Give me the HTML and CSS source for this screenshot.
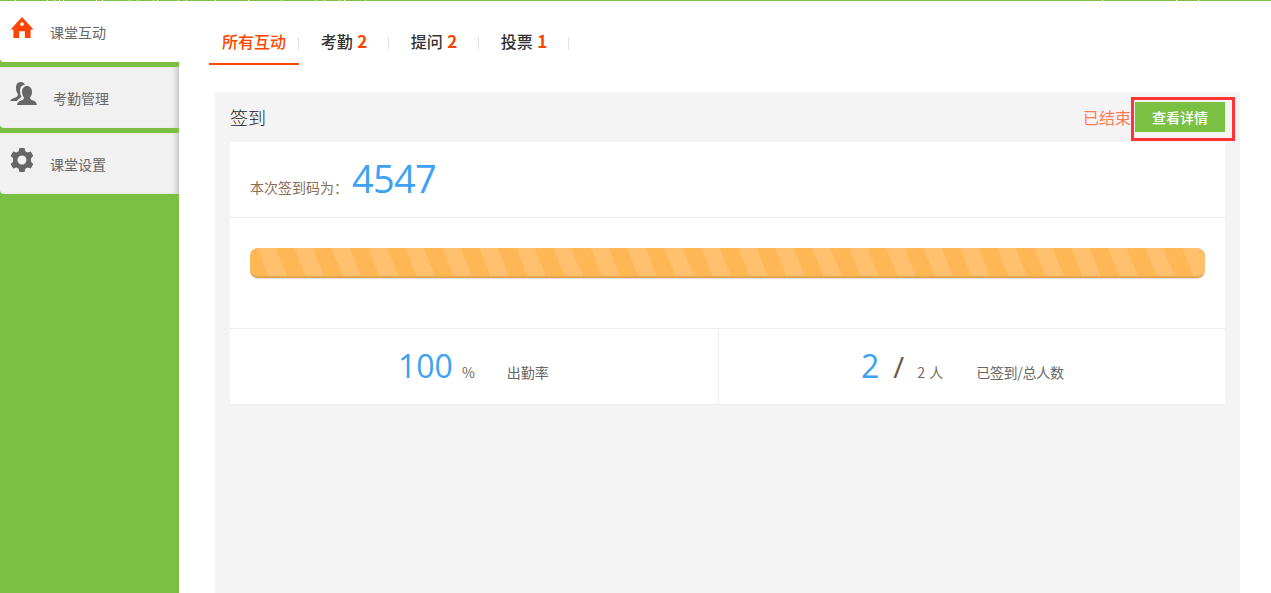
FILE: index.html
```html
<!DOCTYPE html>
<html>
<head>
    <meta charset="UTF-8">
    <meta name="viewport" content="width=device-width, initial-scale=1.0">
    <title>课堂互动</title>
    <link rel="stylesheet" href="styles.css">
</head>
<body>
    <div class="topline"></div>
    <div class="page">
        <div class="sidebar">
            <a class="side-item active">
                <svg class="side-icon icon-home" viewBox="0 0 24 22"><path d="M12 0 L24 13 L21 13 L21 22 L15 22 L15 15 L9 15 L9 22 L3 22 L3 13 L0 13 Z M12 5.5 a2 2 0 1 0 0.01 0 Z" fill-rule="evenodd"/></svg>
                <span class="side-text">课堂互动</span>
            </a>
            <a class="side-item item-people">
                <svg class="side-icon icon-people" viewBox="0 0 27 23"><path d="M11 0 C7 0 6 3 6 6 C6 9 7 11 8 12 C8 14 7 15 4 16 C2 17 0 18 0 19 L7 19 C8 17 10 16 11.5 15 C10.5 13 10 11 10 8 C10 5 12 3 15 2.5 C14 1 13 0 11 0 Z"/><path d="M17 4 C14 4 12 6.5 12 10 C12 12.5 13 14.5 14 15.5 C14 17 13 18 11 18.5 C9 19 7.5 20.5 7 23 L27 23 C26.5 20.5 25 19 23 18.5 C21 18 20 17 20 15.5 C21 14.5 22 12.5 22 10 C22 6.5 20 4 17 4 Z"/></svg>
                <span class="side-text">考勤管理</span>
            </a>
            <a class="side-item">
                <svg class="side-icon icon-gear" viewBox="0 0 24 24"><path fill-rule="evenodd" d="M9.5 0 L14.5 0 L15.3 3.2 L17.6 4.5 L20.8 3.6 L23.3 7.9 L21 10.2 L21 13.8 L23.3 16.1 L20.8 20.4 L17.6 19.5 L15.3 20.8 L14.5 24 L9.5 24 L8.7 20.8 L6.4 19.5 L3.2 20.4 L0.7 16.1 L3 13.8 L3 10.2 L0.7 7.9 L3.2 3.6 L6.4 4.5 L8.7 3.2 Z M12 7.5 a4.5 4.5 0 1 0 0.01 0 Z"/></svg>
                <span class="side-text">课堂设置</span>
            </a>
        </div>
        <div class="main">
            <div class="tabs">
                <a class="tab current">所有互动</a>
                <a class="tab">考勤 <b>2</b></a>
                <a class="tab">提问 <b>2</b></a>
                <a class="tab">投票 <b>1</b></a>
            </div>
            <div class="card">
                <div class="card-head">
                    <span class="card-title">签到</span>
                    <div class="card-actions">
                        <span class="status">已结束</span>
                        <a class="btn-detail">查看详情</a>
                    </div>
                </div>
                <div class="card-body">
                    <div class="code-row">
                        <span class="code-label">本次签到码为：</span>
                        <span class="code-num">4547</span>
                    </div>
                    <div class="progress-row">
                        <div class="progress"></div>
                    </div>
                    <div class="stats">
                        <div class="stat stat-left">
                            <span class="big">100</span>
                            <span class="unit">%</span>
                            <span class="stat-label">出勤率</span>
                        </div>
                        <div class="stat stat-right">
                            <span class="big">2</span>
                            <span class="slash">/</span>
                            <span class="unit">2 人</span>
                            <span class="stat-label">已签到/总人数</span>
                        </div>
                    </div>
                </div>
            </div>
        </div>
    </div>
</body>
</html>
```

FILE: styles.css
```css
html, body {
    margin: 0;
    height: 100%;
    overflow: hidden;
}

body {
    font-family: "Noto Sans CJK SC", "Open Sans", sans-serif;
    background: #fff;
    color: #666;
    position: relative;
}

/* broken green line along the top edge */
.topline {
    position: absolute;
    top: 0;
    left: 0;
    right: 0;
    height: 1px;
    z-index: 3;
    background-color: #7ac143;
    background-repeat: no-repeat;
    background-size: 1px 1px;
    background-image:
        linear-gradient(#fff, #fff), linear-gradient(#fff, #fff), linear-gradient(#fff, #fff),
        linear-gradient(#fff, #fff), linear-gradient(#fff, #fff), linear-gradient(#fff, #fff),
        linear-gradient(#fff, #fff), linear-gradient(#fff, #fff), linear-gradient(#fff, #fff),
        linear-gradient(#fff, #fff), linear-gradient(#fff, #fff), linear-gradient(#fff, #fff),
        linear-gradient(#fff, #fff), linear-gradient(#fff, #fff), linear-gradient(#fff, #fff),
        linear-gradient(#fff, #fff), linear-gradient(#fff, #fff), linear-gradient(#fff, #fff),
        linear-gradient(#fff, #fff), linear-gradient(#fff, #fff), linear-gradient(#fff, #fff),
        linear-gradient(#fff, #fff), linear-gradient(#fff, #fff), linear-gradient(#fff, #fff);
    background-position:
        15px 0, 47px 0, 54px 0, 59px 0, 63px 0, 96px 0, 102px 0, 129px 0,
        137px 0, 153px 0, 157px 0, 178px 0, 186px 0, 215px 0, 248px 0, 281px 0,
        315px 0, 324px 0, 339px 0, 344px 0, 365px 0, 1102px 0, 1176px 0, 1198px 0;
}

.page {
    display: flex;
    height: 100%;
}

.sidebar {
    width: 179px;
    flex: none;
    background: #7ac143;
}

.side-item {
    display: block;
    position: relative;
    height: 61px;
    margin-bottom: 5px;
    background: #f1f1f1;
    border-radius: 0 0 0 4px;
    box-shadow: inset -6px 0 6px -4px rgba(0, 0, 0, 0.22);
}

.side-item.active {
    height: 62px;
    background: #fff;
    box-shadow: none;
}

.side-icon {
    position: absolute;
    fill: #666;
}

.icon-home {
    left: 10px;
    top: 17px;
    width: 24px;
    height: 21px;
    fill: #ff4400;
}

.icon-people {
    left: 10px;
    top: 15px;
    width: 27px;
    height: 23px;
}

.icon-gear {
    left: 10px;
    top: 15px;
    width: 24px;
    height: 24px;
}

.side-text {
    position: absolute;
    left: 50px;
    top: 21px;
    font-size: 14px;
    line-height: 20px;
}

.active .side-text {
    top: 22px;
}

.item-people .side-text {
    left: 53px;
}

.main {
    flex: 1;
    min-width: 0;
}

.tabs {
    display: flex;
    margin-left: 30px;
    height: 65px;
    box-sizing: border-box;
    padding-top: 31px;
}

.tab {
    position: relative;
    width: 90px;
    height: 34px;
    box-sizing: border-box;
    text-align: center;
    font-size: 16px;
    line-height: 20px;
    font-weight: 500;
    color: #333;
}

.tab::after {
    content: "";
    position: absolute;
    right: 0;
    top: 6px;
    width: 1px;
    height: 13px;
    background: #e2e2e2;
}

.tab b {
    color: #ff4400;
    font-size: 17px;
    margin-left: 1px;
}

.tab.current {
    color: #ff4400;
    border-bottom: 2px solid #ff4400;
}

.card {
    margin: 27px 31px 0 36px;
    height: 520px;
    background: #f4f4f4;
    padding: 0 15px;
}

.card-head {
    display: flex;
    justify-content: space-between;
    align-items: center;
    height: 50px;
}

.card-title {
    font-size: 18px;
    font-weight: 300;
    color: #222;
}

.card-actions {
    display: flex;
    align-items: center;
    position: relative;
}

.status {
    font-size: 16px;
    color: #ff7a55;
    margin-right: 4px;
}

.btn-detail {
    width: 90px;
    height: 30px;
    line-height: 30px;
    text-align: center;
    font-size: 14px;
    font-weight: 500;
    color: #fff;
    background: #7ac143;
    position: relative;
}

/* red highlight box drawn on top of the button */
.btn-detail::after {
    content: "";
    position: absolute;
    left: -4px;
    top: -5px;
    width: 104px;
    height: 44px;
    box-sizing: border-box;
    border: 3px solid #ff3333;
}

.card-body {
    background: #fff;
}

.code-row {
    height: 65px;
    border-bottom: 1px solid #eeeef2;
    display: flex;
    align-items: baseline;
    padding: 10px 0 0 20px;
}

.code-label {
    font-size: 14px;
    color: #8a6d55;
    margin-right: 4px;
}

.code-num {
    font-family: "Open Sans", sans-serif;
    font-size: 38px;
    letter-spacing: -0.7px;
    color: #3da2f2;
}

.progress-row {
    height: 111px;
    padding: 30px 20px 0;
    box-sizing: border-box;
    border-bottom: 1px solid #eeeef2;
}

.progress {
    height: 30px;
    border-radius: 8px;
    box-sizing: border-box;
    border-bottom: 2px solid #e8a550;
    box-shadow: 0 1px 0 #ddd;
    background-color: #ffb655;
    background-image: repeating-linear-gradient(
        68deg,
        transparent 0,
        transparent 17.3px,
        rgba(255, 255, 255, 0.15) 17.3px,
        rgba(255, 255, 255, 0.15) 34.3px
    );
}

.stats {
    display: flex;
    height: 75px;
    border-bottom: 1px solid #eeeef2;
}

.stat {
    display: flex;
    align-items: baseline;
    box-sizing: border-box;
    padding-top: 15px;
}

.stat-left {
    width: 489px;
    padding-left: 168px;
    border-right: 1px solid #eeeef2;
}

.stat-right {
    flex: 1;
    padding-left: 142px;
}

.big {
    font-family: "Open Sans", sans-serif;
    font-size: 32px;
    color: #3da2f2;
}

.slash {
    font-family: "Open Sans", sans-serif;
    font-size: 30px;
    color: #6e5a48;
    margin-left: 14px;
}

.unit {
    font-size: 14px;
    color: #7a6a5c;
    margin-left: 9px;
}

.stat-label {
    font-size: 14px;
    color: #666;
    margin-left: 32px;
}

.stat-right .unit {
    margin-left: 13px;
    word-spacing: 1px;
}

.stat-right .stat-label {
    margin-left: 33px;
    letter-spacing: -0.3px;
}
```
